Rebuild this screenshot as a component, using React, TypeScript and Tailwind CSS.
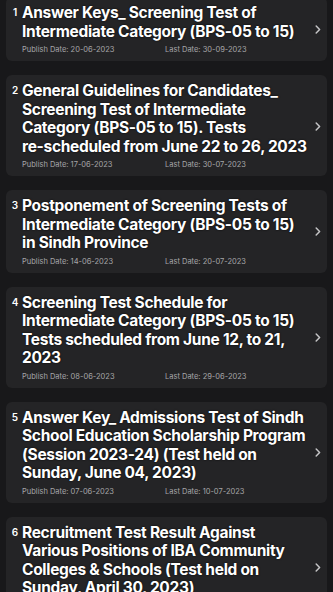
import React from 'react';

interface Notice {
  id: number;
  title: string;
  publishDate: string;
  lastDate: string;
}

const notices: Notice[] = [
  {
    id: 1,
    title: 'Answer Keys_ Screening Test of Intermediate Category (BPS-05 to 15)',
    publishDate: '20-06-2023',
    lastDate: '30-09-2023',
  },
  {
    id: 2,
    title:
      'General Guidelines for Candidates_ Screening Test of Intermediate Category (BPS-05 to 15). Tests re-scheduled from June 22 to 26, 2023',
    publishDate: '17-06-2023',
    lastDate: '30-07-2023',
  },
  {
    id: 3,
    title: 'Postponement of Screening Tests of Intermediate Category (BPS-05 to 15) in Sindh Province',
    publishDate: '14-06-2023',
    lastDate: '20-07-2023',
  },
  {
    id: 4,
    title: 'Screening Test Schedule for Intermediate Category (BPS-05 to 15) Tests scheduled from June 12, to 21, 2023',
    publishDate: '08-06-2023',
    lastDate: '29-06-2023',
  },
  {
    id: 5,
    title:
      'Answer Key_ Admissions Test of Sindh School Education Scholarship Program (Session 2023-24) (Test held on Sunday, June 04, 2023)',
    publishDate: '07-06-2023',
    lastDate: '10-07-2023',
  },
  {
    id: 6,
    title:
      'Recruitment Test Result Against Various Positions of IBA Community Colleges & Schools (Test held on Sunday, April 30, 2023)',
    publishDate: '05-05-2023',
    lastDate: '30-06-2023',
  },
];

// keep hyphenated words like "re-scheduled" and "2023-24" on one line
const renderTitle = (title: string) =>
  title.split(' ').map((word, i) => (
    <React.Fragment key={i}>
      {i > 0 && ' '}
      {word.includes('-') ? <span className="whitespace-nowrap">{word}</span> : word}
    </React.Fragment>
  ));

const Chevron = () => (
  <svg width="6" height="9" viewBox="0 0 6 9" fill="none" className="shrink-0">
    <path d="M1.2 1 L4.6 4.5 L1.2 8" stroke="#c4c4c6" strokeWidth="1.5" strokeLinecap="round" strokeLinejoin="round" />
  </svg>
);

const NoticeCard = ({ notice }: { notice: Notice }) => (
  <div className="flex items-center rounded-[6px] bg-[#242426] pl-[5px] pr-[6px] pt-[7px] pb-[6px]">
    <div className="flex min-w-0 flex-1">
      {/* Serial number sits at the top of the first line */}
      <span className="w-[8px] shrink-0 pt-[3px] text-center text-[10px] font-semibold leading-[10px] text-white">
        {notice.id}
      </span>
      <div className="min-w-0 flex-1 pl-[3px]">
        <p className="text-[15.5px] font-bold leading-[18.5px] tracking-[-0.3px] text-white [text-shadow:0_0_2px_rgba(0,0,0,0.9)]">
          {renderTitle(notice.title)}
        </p>
        <div className="mt-[4px] flex text-[7.5px] leading-[10px] text-[#a6a6a8]">
          <span className="w-1/2">Publish Date: {notice.publishDate}</span>
          <span className="w-1/2">Last Date: {notice.lastDate}</span>
        </div>
      </div>
    </div>
    <div className="ml-[7px]">
      <Chevron />
    </div>
  </div>
);

export default function App() {
  return (
    <div className="h-[592px] overflow-hidden bg-[#18181a] font-['Inter','Liberation_Sans',sans-serif]">
      <div className="mt-[-3px] flex flex-col gap-[14px] px-[6px]">
        {notices.map((n) => (
          <NoticeCard key={n.id} notice={n} />
        ))}
      </div>
    </div>
  );
}
